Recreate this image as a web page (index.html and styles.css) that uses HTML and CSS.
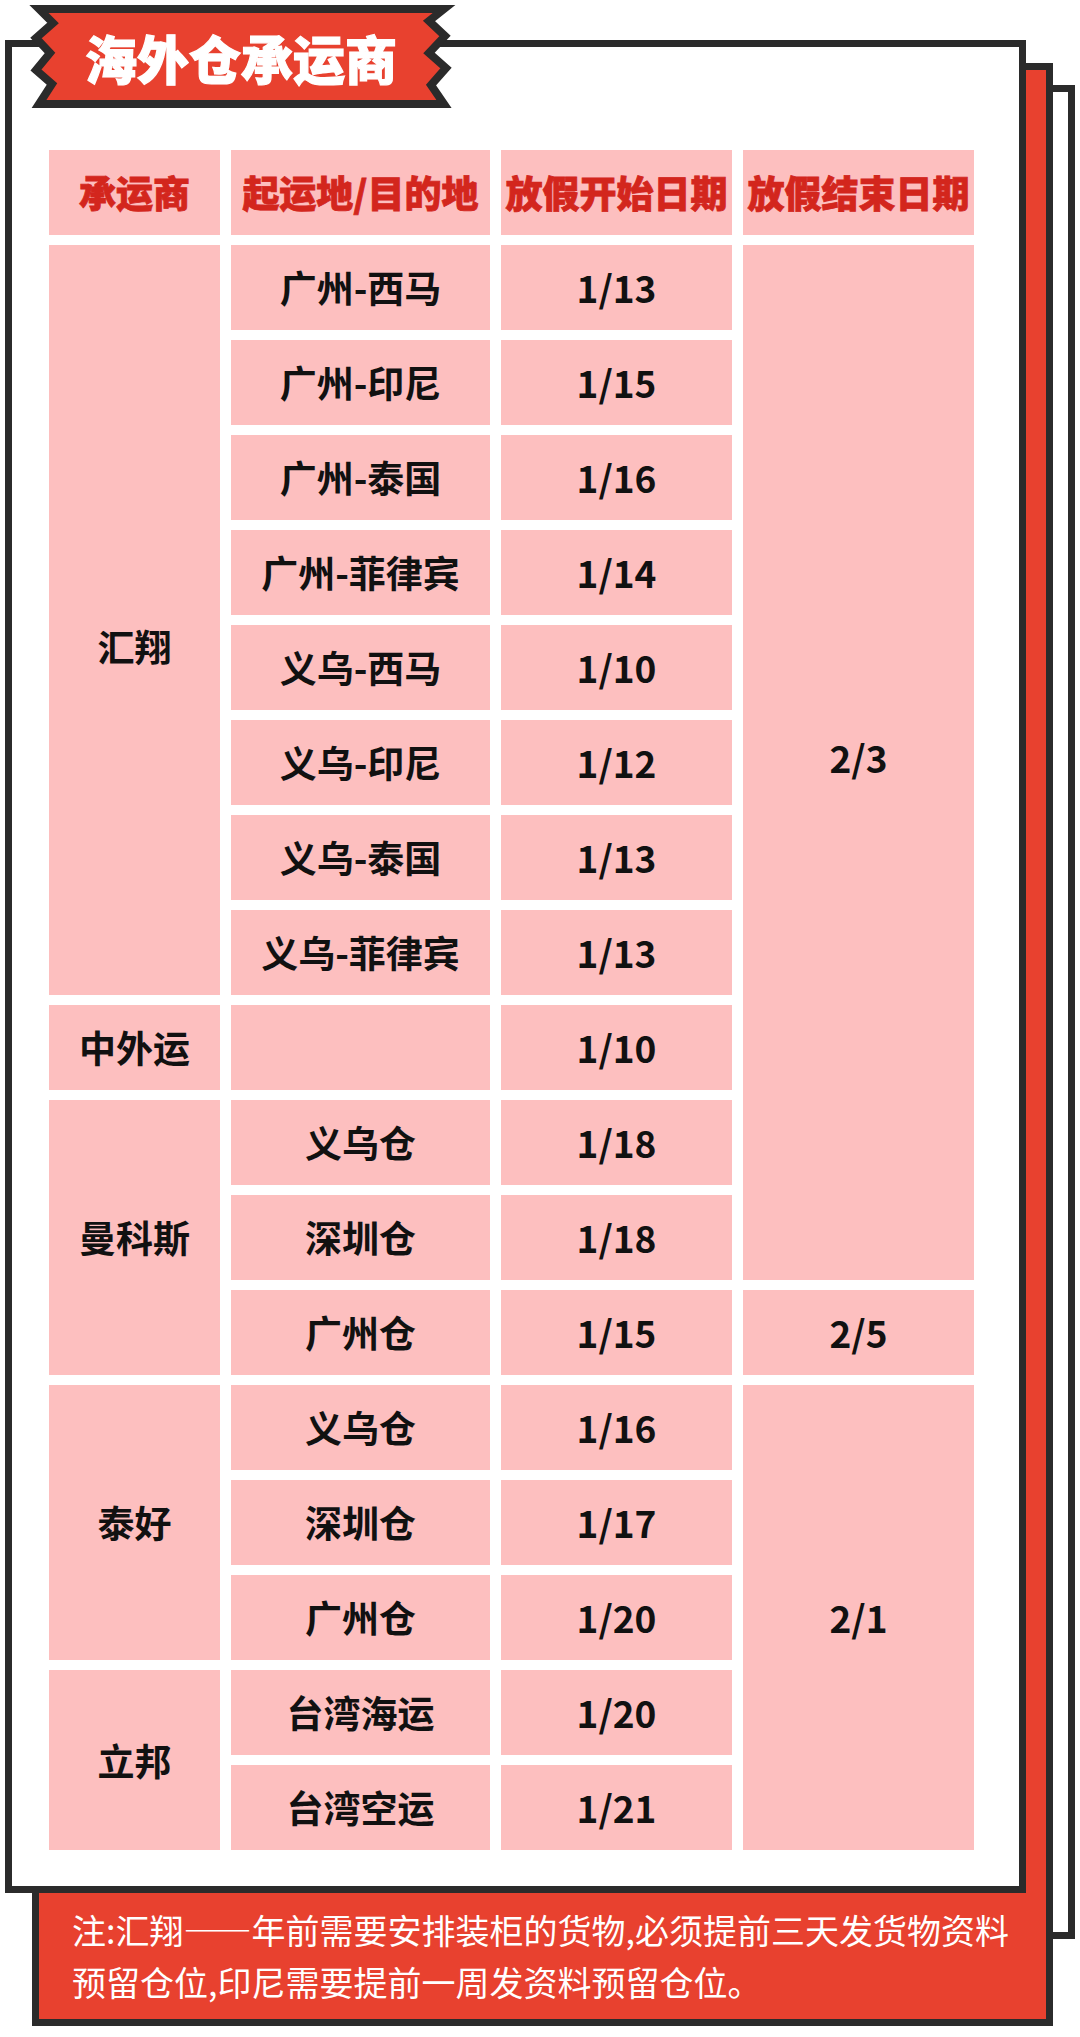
FILE: index.html
```html
<!DOCTYPE html>
<html lang="zh-CN">
<head>
<meta charset="utf-8">
<title>海外仓承运商</title>
<link rel="stylesheet" href="styles.css">
</head>
<body>
<div class="stack">
  <div class="sheet sheet-back"></div>
  <div class="sheet sheet-red">
    <p class="note">注:汇翔——年前需要安排装柜的货物,必须提前三天发货物资料<br>预留仓位,印尼需要提前一周发资料预留仓位。</p>
  </div>
  <div class="sheet sheet-front">
    <div class="ribbon">
      <svg class="ribbon-shape" width="416" height="104" viewBox="0 0 416 104">
        <polygon points="6,4 20,18 3,33 17,48 3,65 19,79 6,99 411,99 398,80 413,63 396,48 412,31 396,16 411,4" fill="#e8412f" stroke="#2b2b2b" stroke-width="8" stroke-linejoin="miter"/>
      </svg>
      <span class="ribbon-text">海外仓承运商</span>
    </div>
    <div class="table">
      <div class="cell head">承运商</div>
      <div class="cell head">起运地/目的地</div>
      <div class="cell head">放假开始日期</div>
      <div class="cell head">放假结束日期</div>

      <div class="cell span-8 shift">汇翔</div>
      <div class="cell">广州-西马</div>
      <div class="cell">1/13</div>
      <div class="cell span-11 lift">2/3</div>
      <div class="cell">广州-印尼</div>
      <div class="cell">1/15</div>
      <div class="cell">广州-泰国</div>
      <div class="cell">1/16</div>
      <div class="cell">广州-菲律宾</div>
      <div class="cell">1/14</div>
      <div class="cell">义乌-西马</div>
      <div class="cell">1/10</div>
      <div class="cell">义乌-印尼</div>
      <div class="cell">1/12</div>
      <div class="cell">义乌-泰国</div>
      <div class="cell">1/13</div>
      <div class="cell">义乌-菲律宾</div>
      <div class="cell">1/13</div>

      <div class="cell">中外运</div>
      <div class="cell"></div>
      <div class="cell">1/10</div>

      <div class="cell span-3">曼科斯</div>
      <div class="cell">义乌仓</div>
      <div class="cell">1/18</div>
      <div class="cell">深圳仓</div>
      <div class="cell">1/18</div>
      <div class="cell">广州仓</div>
      <div class="cell">1/15</div>
      <div class="cell">2/5</div>

      <div class="cell span-3">泰好</div>
      <div class="cell">义乌仓</div>
      <div class="cell">1/16</div>
      <div class="cell span-5">2/1</div>
      <div class="cell">深圳仓</div>
      <div class="cell">1/17</div>
      <div class="cell">广州仓</div>
      <div class="cell">1/20</div>

      <div class="cell span-2">立邦</div>
      <div class="cell">台湾海运</div>
      <div class="cell">1/20</div>
      <div class="cell">台湾空运</div>
      <div class="cell">1/21</div>
    </div>
  </div>
</div>
</body>
</html>
```

FILE: styles.css
```css
html, body {
  margin: 0;
  padding: 0;
  background: #ffffff;
}

body {
  font-family: "Noto Sans CJK SC", "Noto Sans", sans-serif;
  color: #111111;
}

.stack {
  display: grid;
  grid-template-columns: 1080px;
  grid-template-rows: 2037px;
  width: 1080px;
  height: 2037px;
}

.sheet {
  grid-area: 1 / 1;
  border: 7px solid #2b2b2b;
  box-sizing: border-box;
}

.sheet-back {
  margin: 85px 5px 98px 54px;
  background: #ffffff;
}

.sheet-red {
  margin: 63px 27px 11px 32px;
  background: #e8412f;
  display: flex;
  flex-direction: column;
  justify-content: flex-end;
  padding: 0 20px 11px 33px;
}

.note {
  margin: 0;
  font-size: 34px;
  line-height: 52px;
  font-weight: 400;
  color: #ffffff;
  white-space: nowrap;
}

.sheet-front {
  margin: 40px 54px 144px 5px;
  background: #ffffff;
  position: relative;
  padding: 103px 0 0 37px;
}

.ribbon {
  position: absolute;
  left: 21px;
  top: -42px;
  width: 416px;
  height: 104px;
  display: flex;
  align-items: center;
  justify-content: center;
}

.ribbon-shape {
  position: absolute;
  left: 0;
  top: 0;
  overflow: visible;
}

.ribbon-text {
  position: relative;
  font-size: 52px;
  font-weight: 900;
  color: #ffffff;
  line-height: 1;
  margin-top: 2px;
  -webkit-text-stroke: 1.2px #ffffff;
}

.table {
  display: grid;
  grid-template-columns: 171px 259px 231px 231px;
  grid-auto-rows: 85px;
  column-gap: 11px;
  row-gap: 10px;
}

.cell {
  background: #fdbfbf;
  display: flex;
  align-items: center;
  justify-content: center;
  font-size: 37px;
  font-weight: 700;
  line-height: 1;
  white-space: nowrap;
  box-sizing: border-box;
}

.head {
  color: #d3261d;
  font-weight: 900;
  -webkit-text-stroke: 0.8px #d3261d;
}

.shift {
  padding-top: 52px;
}

.lift {
  padding-bottom: 10px;
}

.span-2 { grid-row: span 2; }
.span-3 { grid-row: span 3; }
.span-5 { grid-row: span 5; }
.span-8 { grid-row: span 8; }
.span-11 { grid-row: span 11; }
```
